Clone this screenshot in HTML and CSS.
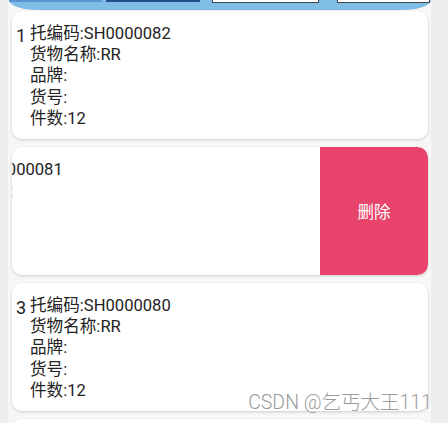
FILE: index.html
```html
<!DOCTYPE html>
<html lang="zh">
<head>
    <meta charset="UTF-8">
    <title>托盘列表</title>
    <link rel="stylesheet" href="styles.css">
</head>
<body>
    <div class="page">
        <div class="topbar">
            <span class="tab tab-a"></span>
            <span class="tab tab-b"></span>
            <span class="tab tab-c"></span>
            <span class="tab tab-d"></span>
        </div>

        <div class="list">
            <div class="card">
                <div class="card-body">
                    <span class="num">1</span>
                    <div class="info">
                        <div>托编码:SH0000082</div>
                        <div>货物名称:RR</div>
                        <div>品牌:</div>
                        <div>货号:</div>
                        <div>件数:12</div>
                    </div>
                </div>
            </div>

            <div class="card swiped">
                <div class="card-body">
                    <span class="num">2</span>
                    <div class="info">
                        <div>托编码:SH0000081</div>
                        <div>货物名称:RR</div>
                        <div>品牌:</div>
                        <div>货号:</div>
                        <div>件数:12</div>
                    </div>
                </div>
                <button class="del">删除</button>
            </div>

            <div class="card">
                <div class="card-body">
                    <span class="num">3</span>
                    <div class="info">
                        <div>托编码:SH0000080</div>
                        <div>货物名称:RR</div>
                        <div>品牌:</div>
                        <div>货号:</div>
                        <div>件数:12</div>
                    </div>
                </div>
            </div>

            <div class="card"></div>
        </div>
    </div>
    <div class="watermark">CSDN @乞丐大王111</div>
</body>
</html>
```

FILE: styles.css
```css
body { position: relative; margin: 0; height: 423px; background: #eeeeee; font-family: Roboto, "Noto Sans CJK SC", sans-serif; color: #222; overflow: hidden; }
.page { width: 423px; height: 423px; margin-left: 8px; background: #f7f7f7; overflow: hidden; }

.topbar { display: flex; height: 10px; margin-left: 1px; background: #80bde6; border-radius: 0 0 28px 28px / 0 0 10px 10px; }
.tab { display: block; height: 2px; }
.tab-a { width: 93px; background: #5b95d0; }
.tab-b { width: 94px; margin-left: 4px; background: #1f4e8b; }
.tab-c { width: 105px; height: 2px; margin-left: 12px; background: #fff; border: 1px solid #444; border-top: none; }
.tab-d { width: 91px; height: 2px; margin-left: 18px; background: #fff; border: 1px solid #444; border-top: none; }

.list { display: flex; flex-direction: column; gap: 8px; padding: 1px 3px 0 4px; }
.card { display: flex; height: 128px; background: #fff; border-radius: 10px; box-shadow: 0 1px 3px rgba(0,0,0,0.18); overflow: hidden; flex-shrink: 0; }
.card-body { display: flex; flex: 0 0 416px; padding: 12px 0 0 4px; box-sizing: border-box; }
.num { width: 14px; font-size: 18px; line-height: 26px; }
.info { font-size: 16.6px; line-height: 21.2px; }

.swiped .card-body { margin-left: -108px; }
.del { flex: 0 0 108px; border: none; background: #e8436a; color: #fff; font-size: 16.5px; font-family: inherit; border-radius: 0 10px 10px 0; }

.watermark { position: absolute; right: 16px; bottom: 8px; font-size: 19.5px; font-weight: 300; color: #9a9a9a; text-shadow: 0 0 1px #fff, 0 0 1px #fff; }
```
